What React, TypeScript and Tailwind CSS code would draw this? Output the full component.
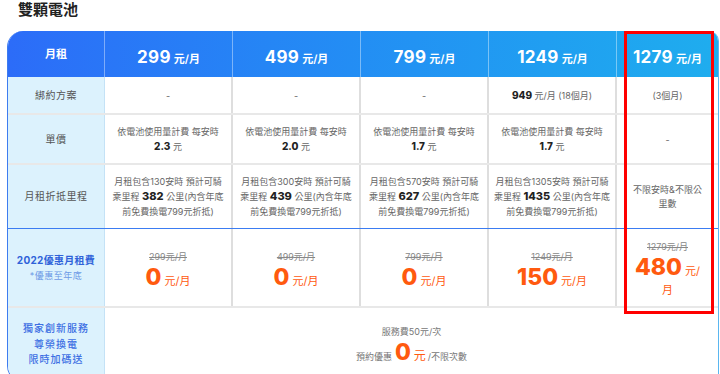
const cols = "grid grid-cols-[97px_128px_128px_128px_128px_1fr]";
const font = "font-['Inter','Noto_Sans_CJK_TC',sans-serif]";

const headPrices = ["299", "499", "799", "1249", "1279"];

function BodyCell({ children, last, className = "" }: { children: React.ReactNode; last?: boolean; className?: string }) {
  return (
    <div
      className={
        "flex flex-col items-center justify-center text-center text-[9px] leading-[15px] text-[#666] " +
        (last ? "" : "border-r-2 border-[#dedede] ") +
        className
      }
    >
      {children}
    </div>
  );
}

function LabelCell({ children }: { children: React.ReactNode }) {
  return (
    <div className="flex flex-col items-center justify-center bg-[#dcf2fd] border-r border-[#c4e2f6] text-[10px] tracking-[0.5px] text-[#555]">
      {children}
    </div>
  );
}

function Mileage({ hours, km }: { hours: string; km: string }) {
  return (
    <>
      <div>月租包含{hours}安時 預計可騎</div>
      <div>
        乘里程 <b className="text-[11px] font-extrabold text-[#222]">{km}</b> 公里(內含年底
      </div>
      <div>前免費換電799元折抵)</div>
    </>
  );
}

function Promo({ orig, price }: { orig: string; price: string }) {
  return (
    <>
      <div className="text-[9px] leading-[12px] text-[#888] line-through">{orig}元/月</div>
      <div className="flex items-baseline text-[#ff5a0f]">
        <span className="text-[23px] leading-[28px] font-extrabold">{price}</span>
        <span className="ml-[3px] text-[11px]">元/月</span>
      </div>
    </>
  );
}

export default function App() {
  return (
    <div className={"bg-white w-[720px] h-[374px] overflow-hidden pl-[7px] " + font}>
      <h1 className="ml-[11px] pt-[1px] h-[31px] text-[15px] font-bold leading-[18px] text-[#222]">雙顆電池</h1>

      <div className="relative w-[712px] rounded-tl-[16px] rounded-tr-[10px] rounded-bl-[16px] border-l border-r border-b border-l-[#3d7cf0] border-r-[#5ab6f0] border-b-[#5a90f0] overflow-hidden">
        {/* header */}
        <div className={cols + " h-[46px] bg-gradient-to-r from-[#2c6cf8] to-[#1fadee] text-white"}>
          <div className="flex items-center justify-center border-r border-white/40 text-[11px] font-bold">月租</div>
          {headPrices.map((p, i) => (
            <div
              key={p}
              className={
                "flex items-baseline justify-center pt-[14px] " + (i < 4 ? "border-r border-white/40" : "")
              }
            >
              <span className="text-[17px] font-bold tracking-[0.3px]">{p}</span>
              <span className="ml-[3px] text-[11px] font-semibold">元/月</span>
            </div>
          ))}
        </div>

        {/* 綁約方案 */}
        <div className={cols + " h-[38px] border-b-2 border-[#e8e8e8]"}>
          <LabelCell>綁約方案</LabelCell>
          <BodyCell>-</BodyCell>
          <BodyCell>-</BodyCell>
          <BodyCell>-</BodyCell>
          <BodyCell>
            <div>
              <b className="text-[10px] font-extrabold text-[#222]">949</b> 元/月 (18個月)
            </div>
          </BodyCell>
          <BodyCell last>(3個月)</BodyCell>
        </div>

        {/* 單價 */}
        <div className={cols + " h-[50px] border-b-2 border-[#e8e8e8]"}>
          <LabelCell>單價</LabelCell>
          {["2.3", "2.0", "1.7", "1.7"].map((v, i) => (
            <BodyCell key={i}>
              <div>依電池使用量計費 每安時</div>
              <div>
                <b className="text-[10px] font-extrabold text-[#222]">{v}</b> 元
              </div>
            </BodyCell>
          ))}
          <BodyCell last>-</BodyCell>
        </div>

        {/* 月租折抵里程 */}
        <div className={cols + " h-[64px] border-b border-[#3b7cf2]"}>
          <LabelCell>月租折抵里程</LabelCell>
          <BodyCell>
            <Mileage hours="130" km="382" />
          </BodyCell>
          <BodyCell>
            <Mileage hours="300" km="439" />
          </BodyCell>
          <BodyCell>
            <Mileage hours="570" km="627" />
          </BodyCell>
          <BodyCell>
            <Mileage hours="1305" km="1435" />
          </BodyCell>
          <BodyCell last>
            <div className="leading-[14px]">
              不限安時&amp;不限公
              <br />
              里數
            </div>
          </BodyCell>
        </div>

        {/* 2022優惠 */}
        <div className={cols + " h-[79px] border-b-2 border-[#e8e8e8]"}>
          <div className="flex flex-col items-center justify-center bg-[#dcf2fd] border-r border-[#c4e2f6] leading-[16px]">
            <div className="text-[10px] font-bold text-[#2f62d9] tracking-[0.3px]">2022優惠月租費</div>
            <div className="text-[9px] text-[#6d9ae6] tracking-[0.5px]">*優惠至年底</div>
          </div>
          <BodyCell className="pt-[6px]">
            <Promo orig="299" price="0" />
          </BodyCell>
          <BodyCell className="pt-[6px]">
            <Promo orig="499" price="0" />
          </BodyCell>
          <BodyCell className="pt-[6px]">
            <Promo orig="799" price="0" />
          </BodyCell>
          <BodyCell className="pt-[6px]">
            <Promo orig="1249" price="150" />
          </BodyCell>
          <BodyCell last className="pt-[4px]">
            <div className="text-[9px] leading-[12px] text-[#888] line-through">1279元/月</div>
            <div className="flex items-baseline text-[#ff5a0f]">
              <span className="text-[23px] leading-[28px] font-extrabold">480</span>
              <span className="ml-[3px] text-[11px]">元/</span>
            </div>
            <div className="text-[11px] leading-[18px] text-[#ff5a0f]">月</div>
          </BodyCell>
        </div>

        {/* 獨家創新服務 */}
        <div className="grid grid-cols-[97px_1fr] h-[73px]">
          <div className="flex flex-col items-center pt-[13px] bg-[#dcf2fd] border-r border-[#c4e2f6] text-[10px] leading-[15.5px] font-medium tracking-[1px] text-[#3d6fe3]">
            <div>獨家創新服務</div>
            <div>尊榮換電</div>
            <div>限時加碼送</div>
          </div>
          <div className="flex flex-col items-center pt-[17px] text-[9px] text-[#777]">
            <div className="leading-[14px]">服務費50元/次</div>
            <div className="flex items-baseline">
              <span>預約優惠</span>
              <span className="ml-[3px] text-[23px] leading-[26px] font-extrabold text-[#ff5a0f]">0</span>
              <span className="ml-[3px] text-[12px] text-[#ff5a0f]">元</span>
              <span className="ml-[2px]">/不限次數</span>
            </div>
          </div>
        </div>
      </div>

      {/* red annotation box */}
      <div className="absolute left-[624px] top-[31px] w-[90px] h-[283px] border-[3px] border-[#f00]" />
    </div>
  );
}
